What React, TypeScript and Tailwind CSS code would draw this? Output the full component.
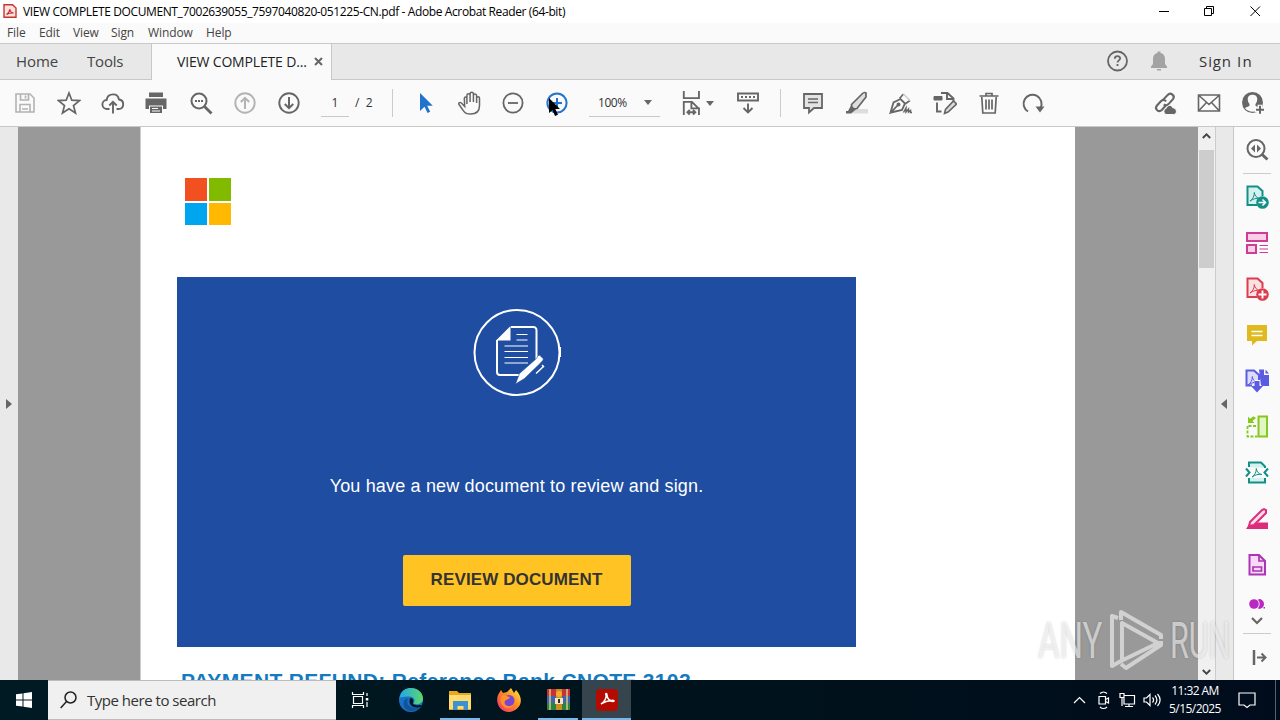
import React from 'react';
import clsx from 'clsx';

type IconProps = {
  children: React.ReactNode;
  className?: string;
  size?: number;
};

// Shared 24px line icon
const Icon: React.FC<IconProps> = ({ children, className, size = 24 }) => (
  <svg
    width={size}
    height={size}
    viewBox="0 0 24 24"
    fill="none"
    stroke="currentColor"
    strokeWidth="2"
    className={clsx('shrink-0', className)}
  >
    {children}
  </svg>
);

const Tool: React.FC<{ children: React.ReactNode; className?: string }> = ({ children, className }) => (
  <button className="flex h-full w-11 items-center justify-center">
    <Icon className={className}>{children}</Icon>
  </button>
);

const menus = [
  { label: 'File', width: 'w-8' },
  { label: 'Edit', width: 'w-[34px]' },
  { label: 'View', width: 'w-[38px]' },
  { label: 'Sign', width: 'w-[37px]' },
  { label: 'Window', width: 'w-[58px]' },
  { label: 'Help', width: 'w-8' },
];

const TitleBar = () => (
  <header className="flex h-[23px] items-center bg-white text-black">
    <svg width="14" height="16" viewBox="0 0 14 16" className="-mt-px ml-[3px]">
      <path d="M1 1.7h8.500L13 5v9.300H1z" fill="#fbe3e0" stroke="#c8352f" strokeWidth="1.400" />
      <path d="M3.500 11.500c1.500-.7 3-3 3.300-5.500.2 2.200 1.700 3.800 3.900 4-2.700-.2-5 .2-7.200 1.500z" fill="none" stroke="#c8202b" strokeWidth="1.100" />
    </svg>
    <span className="ml-[6px] text-[12px] leading-4 tracking-[-0.385px] whitespace-nowrap">
      VIEW COMPLETE DOCUMENT_7002639055_7597040820-051225-CN.pdf - Adobe Acrobat Reader (64-bit)
    </span>
    <div className="ml-auto flex">
      <svg width="122" height="20" viewBox="0 0 122 20" fill="none" stroke="#000" strokeWidth="1">
        <path d="M1 9.500h10M46.500 6.500h7v7h-7zM48.500 6.500v-2h7v7h-2M92.500 4.500l9.500 9.500M102 4.500l-9.500 9.500" />
      </svg>
    </div>
  </header>
);

const MenuBar = () => (
  <nav className="flex h-5 items-center bg-[#fafafa] pl-[7px] text-[12px] text-[#444]">
    {menus.map((m) => (
      <span key={m.label} className={clsx('shrink-0 tracking-[-0.1px]', m.width)}>{m.label}</span>
    ))}
  </nav>
);

const TabBar = () => (
  <div className="flex h-[37px] border-y border-[#c8c8c8] bg-[#e8e8e8] text-[15px] text-[#444]">
    <span className="w-[71px] pl-4 leading-[34px] tracking-[-0.1px]">Home</span>
    <span className="w-20 pl-4 leading-[34px] tracking-[-0.2px]">Tools</span>
    <div className="-mb-px flex w-[181px] items-center border-x border-[#c8c8c8] bg-[#fafafa] pb-[2px] pl-[25px] text-[14px] text-[#222]">
      <span className="w-[130px] tracking-[-0.17px] whitespace-nowrap">VIEW COMPLETE D...</span>
      <svg width="9" height="9" viewBox="0 0 9 9" className="ml-[7px]" stroke="#666" strokeWidth="2">
        <path d="M1 1l7 7M8 1L1 8" />
      </svg>
    </div>
    <div className="ml-auto flex items-center pb-px text-[#666]">
      <Icon>
        <circle cx="11.500" cy="12" r="9.500" strokeWidth="1.800" />
        <path d="M8.800 9.700c0-3.500 5.500-3.300 5.300-.2-.1 1.800-2.600 2-2.600 4.100M11.500 15v2" strokeWidth="1.800" />
      </Icon>
      <Icon className="ml-[17px] text-[#a3a3a3]">
        <path d="M4 19v-1.500l2-2.500V9.500C6 6.500 8 4.300 10.500 4V2.500h3V4C16 4.300 18 6.500 18 9.500V15l2 2.500V19zM10 20h4v1.500h-4z" fill="currentColor" stroke="none" />
      </Icon>
      <span className="ml-[28px] w-[81px] text-[15px] tracking-[1.2px] text-[#333]"><span className="tracking-[0.9px]">Sign</span> In</span>
    </div>
  </div>
);

const Toolbar = () => (
  <div className="flex h-[47px] items-center border-b border-[#c8c8c8] bg-[#fafafa] pl-[3px] text-[#666]">
    <Tool className="text-[#b3b3b3]">
      <path d="M3 3h14l4 4v14H3zM7.500 3v6h8V3M7 21v-7.500h10V21M12.500 4.500v3M9 18h6" strokeWidth="1.600" />
    </Tool>
    <Tool>
      <path d="M12 2l2.800 7.200 7.700.4-6 4.900 2 7.500L12 17.800 5.500 22l2-7.500-6-4.900 7.700-.4z" strokeWidth="1.700" />
    </Tool>
    <Tool>
      <path d="M8.500 18H6.200a4.500 4.500 0 01-.6-9c.5-3.700 3.200-5.600 6.600-5.600 3.400 0 5.300 2.200 5.700 5.100 6 .6 5.500 9.500-.3 9.500h-2.100M12 22.500V11M8.300 14.500L12 10.800l3.700 3.700" strokeWidth="1.900" />
    </Tool>
    <Tool className="-translate-x-px">
      <path d="M5 1.500h14V6H5zM1.500 7.500h21V18H19v-3.500H5V18H1.500zM6 15.500h12V22H6z" fill="currentColor" stroke="none" />
      <path d="M8 17.500h6M8 20h8" stroke="#fafafa" strokeWidth="1.200" />
    </Tool>
    <Tool>
      <circle cx="10" cy="10" r="7.500" />
      <path d="M15.500 15.500l7 7" strokeWidth="2.800" />
      <path d="M6 10h2M9 10h2M12 10h2" strokeWidth="1.800" />
    </Tool>
    <Tool className="text-[#b3b3b3]">
      <circle cx="12" cy="12" r="9.700" strokeWidth="1.900" />
      <path d="M12 18V7M7.800 11L12 6.800l4.200 4.200" strokeWidth="2" />
    </Tool>
    <Tool>
      <circle cx="12" cy="12" r="9.700" strokeWidth="1.900" />
      <path d="M12 6v11M7.800 13l4.200 4.200 4.200-4.200" strokeWidth="2" />
    </Tool>
    <span className="ml-[10px] h-[28px] w-7 border-b border-[#c8c8c8] text-center text-[12px] leading-[27px] text-[#333]">1</span>
    <span className="ml-[6px] w-[37px] text-[12px] text-[#333]">/&nbsp; 2</span>
    <div className="mr-[11px] h-7 w-px bg-[#ccc]" />
    <Tool className="text-[#2273cc]">
      <path d="M6 2v18l4.500-4.300L13.500 22l2.700-1.300-3-6h5.600z" fill="currentColor" stroke="none" />
    </Tool>
    <Tool>
      <path d="M6.700 15.500L3.400 12c-1.800-1.300-3.300.2-2.200 1.700l4.300 6.200c1.500 2.300 3.700 3.200 7 3.200 5.500 0 9-3.100 9-8.600V7.200c0-2.100-2.800-2.100-2.900 0V12 4.600c0-2.200-3.100-2.300-3.200 0V11 3c0-2.300-3.300-2.300-3.300 0v8V4.500c-.1-2.200-3.200-2.200-3.200 0V13 7.500c-.1-2-2.500-2-2.600 0z" strokeWidth="1.500" />
    </Tool>
    <Tool className="-translate-x-px">
      <circle cx="12" cy="12" r="9.600" strokeWidth="1.800" />
      <path d="M7 12h10" strokeWidth="1.800" />
    </Tool>
    <div className="relative h-full w-11">
      <Tool className="-translate-x-px text-[#2273cc]">
        <circle cx="12" cy="12" r="9.600" />
        <path d="M7 12h10M12 7v10" />
      </Tool>
      <svg width="14" height="19" viewBox="0 0 14 19" className="absolute top-[18px] left-[12px]">
        <path d="M1 0v15l3.500-3 2.500 6 3-1.300-2.600-5.700H12z" fill="#000" />
      </svg>
    </div>
    <div className="ml-[9px] flex h-[28px] w-[71px] items-center border-b border-[#c8c8c8] pl-[9px] text-[12px] text-[#333]">
      <span className="tracking-[-0.45px]">100%</span>
      <svg width="8" height="5" viewBox="0 0 8 5" className="mr-[8px] ml-auto" fill="#666"><path d="M0 0h8L4 5z" /></svg>
    </div>
    <div className="ml-[20px] flex h-full w-16 items-center">
      <Icon size={26}>
        <path d="M3.500 1v6.500h14V1M3.500 23V11H11l6.500 6.500M10.500 11v6h7V23M7 20.500h7M9 18.300l-2.200 2.200L9 22.700M12 18.300l2.200 2.200-2.200 2.200" strokeWidth="1.700" />
      </Icon>
      <svg width="8" height="5" viewBox="0 0 8 5" fill="#666"><path d="M0 0h8L4 5z" /></svg>
    </div>
    <div className="-ml-[18px] flex h-full items-center">
      <Tool>
        <path d="M2 2.500h20v7H2zM12 12.500v9M7.500 17l4.500 4.500 4.500-4.500" strokeWidth="1.900" />
        <path d="M5 6h2M9 6h2M13 6h2M17 6h2" strokeWidth="1.900" />
      </Tool>
    </div>
    <div className="mr-[10px] ml-[10px] h-7 w-px bg-[#ccc]" />
    <Tool>
      <path d="M3 3h18v14h-8l-5 4.500V17H3z" strokeWidth="1.800" fill="#e3e3e3" />
      <path d="M7 8h10M7 11.500h10" strokeWidth="1.500" />
    </Tool>
    <Tool>
      <path d="M12 18h11v4.500H5z" fill="#ddd" stroke="none" />
      <path d="M6.500 13.500L16 4c2-2.500 4-2.800 5-2v4l-9 11.500-5 .5z" fill="#ddd" strokeWidth="1.700" />
      <path d="M6 14.500L3 20H1v2.500h5l5-4z" fill="currentColor" stroke="none" />
    </Tool>
    <Tool>
      <path d="M1.500 21.500L4.500 11.500 11.500 8l4.500 4.500-3 6.500-11 2.500 6.500-7" strokeWidth="1.800" />
      <path d="M10.500 7.500L14.500 3M21 9.500l-5 3.500" strokeWidth="1.700" />
      <path d="M14.500 3l6.500 6.500" stroke="#ccc" strokeWidth="1.500" />
      <circle cx="9.500" cy="13.500" r="1" />
      <path d="M14.500 21.500l2.500-4.500v4l2.500-3v3l2-1.500v2H23" strokeWidth="1.500" />
    </Tool>
    <Tool>
      <path d="M8 2h6.500l6 5.500V10M14 2v6h6.500M4 11.500V20.500h4.500" strokeWidth="1.900" />
      <path d="M1 5.500h8V9H1z" fill="currentColor" strokeWidth="1" />
      <path d="M11.500 22.500l1-4 8-8.500 3 3-8.500 8z" strokeWidth="1.600" fill="#ddd" />
    </Tool>
    <Tool>
      <path d="M2.500 5h19M9 5V2.500h6V5M4.800 6l1 16h12.400l1-16M9 8.500v10M12 8.500v10M15 8.500v10" strokeWidth="1.700" />
    </Tool>
    <Tool>
      <path d="M7 20.500A9 9 0 1119.500 17" strokeWidth="2" />
      <path d="M14.500 15.500h9l-4.500 6z" fill="currentColor" stroke="none" />
    </Tool>
    <div className="mr-[5px] ml-auto flex h-full">
      <Tool>
        <g strokeWidth="2.100">
          <path d="M9.500 9.500l5.200-5.600c3-3 7.800.8 5.300 4.200l-4.500 5c-1.400 1.400-3.400 1.400-4.700.3" />
          <path d="M12.800 14.500l-4 4.500c-3 2.800-7.600-.8-5-4.300l4.300-4.600c1.500-1.500 3.700-1.400 5 .2" />
        </g>
        <path d="M13 23.500a3.300 3.300 0 01.3-6.300c1-3.500 5.300-3.600 6.400-.5 4.800.2 4.800 6.800.8 6.800z" fill="currentColor" stroke="#fafafa" strokeWidth="1" />
      </Tool>
      <Tool>
        <path d="M1.500 4h21v16h-21zM2 4.500l10 9 10-9M2 19.500l7.500-8M22 19.500l-7.500-8" strokeWidth="1.600" />
      </Tool>
      <Tool>
        <circle cx="11.500" cy="11.500" r="10.500" fill="currentColor" stroke="none" />
        <path d="M11.500 3.700c3.500 0 5 2.300 4.700 5-.2 2.200-.9 3.200-1.700 4.200v1.900c1.300 1 3.700 1.200 4.500 2.500-1.800 2.300-4.500 3.500-7.500 3.500s-5.700-1.200-7.500-3.500c.8-1.300 3.200-1.500 4.500-2.500v-1.900c-.8-1-1.500-2-1.700-4.200-.3-2.700 1.200-5 4.700-5z" fill="#fafafa" stroke="none" />
        <path d="M13.800 18.800h10M18.800 13.800v10" stroke="#fafafa" strokeWidth="4.500" />
        <path d="M15 18.800h8M19 14.800v8" strokeWidth="2" />
      </Tool>
    </div>
  </div>
);

const WelcomeCard = () => (
  <section className="flex h-[370px] w-[679px] flex-col items-center bg-[#1e4da1] pt-8 text-white">
    <svg width="88" height="88" viewBox="0 0 88 88" fill="none" stroke="#fff" strokeWidth="2">
      <circle cx="44" cy="43.500" r="42.500" />
      <path d="M38 18h22.500a3 3 0 013 3v34M24 31v32a3 3 0 003 3h21" />
      <path d="M23 31.500L37.500 17v14.500z" fill="#fff" stroke="none" />
      <path d="M43.500 25.500h11M43.500 31h11M31.500 37h23.500M31.500 42.500h23.500M31.500 48.500h23.500M31.500 54h23.500" strokeWidth="1.200" />
      <path d="M42.500 75l4-10.500 17-15c1-2.500 2.500-4 3.500-3l3 3c1 1-1 3-2 4L51.500 69.500z" fill="#fff" stroke="#1e4da1" strokeWidth="0.600" />
      <path d="M69 56l1.500 1.500-7.500 7" strokeWidth="1.500" />
      <path d="M87 38v10" strokeWidth="2" />
    </svg>
    <p className="mt-[75px] text-[18px] leading-7 tracking-[0.165px] whitespace-nowrap">You have a new document to review and sign.</p>
    <button className="mt-[55px] h-[51px] w-[228px] rounded-xs bg-[#ffc424] pb-[2px] text-[17px] font-bold tracking-[0.12px] whitespace-nowrap text-[#333]">
      REVIEW DOCUMENT
    </button>
  </section>
);

const DocumentPage = () => (
  <article className="w-[935px] overflow-hidden border-l border-[#ccc] bg-white pl-9 font-['Liberation_Sans',sans-serif]">
    <div className="mt-[51px] ml-2 grid w-[46px] grid-cols-2 gap-[2px]">
      <i className="h-[23px] bg-[#f35022]" />
      <i className="h-[23px] bg-[#80bb00]" />
      <i className="h-[22px] bg-[#00a5f0]" />
      <i className="h-[22px] bg-[#ffb901]" />
    </div>
    <div className="mt-[52px]">
      <WelcomeCard />
    </div>
    {/* Heading runs past the bottom of the viewport */}
    <h1 className="mt-[22px] ml-1 text-[21px] leading-6 font-bold tracking-[0.34px] whitespace-nowrap text-[#147bc1]">
      PAYMENT REFUND: Reference Bank CNOTE 3102
    </h1>
  </article>
);

const Acrobat = ({ x = 0 }: { x?: number }) => (
  <path
    d="M6 16c2.500-1.500 4.500-5 4.300-8.500.5 3.500 2.500 5.500 5.500 6-3.500-.6-6.500.3-9.800 2.500z"
    transform={`translate(${x} 0)`}
    strokeWidth="1"
  />
);

const sideTools = [
  {
    name: 'export',
    color: 'text-[#148f87]',
    art: (
      <>
        <path d="M12 20H2.500V1.500H12.500L17.500 6v5" fill="#d5f1ef" />
        <Acrobat x={-1} />
        <circle cx="17.500" cy="17.500" r="6.300" fill="currentColor" stroke="none" />
        <path d="M13.500 17.500h7M17.500 14.500l3 3-3 3" stroke="#fff" strokeWidth="1.600" />
      </>
    ),
  },
  {
    name: 'organize',
    color: 'text-[#ce3c98]',
    art: (
      <>
        <path d="M2 2h20v8H2zM2 14h9v8H2z" fill="#f9cfe6" />
        <path d="M14.500 14.500H23M14.500 18H23M14.500 21.500H23" strokeWidth="1.200" />
      </>
    ),
  },
  {
    name: 'create',
    color: 'text-[#dc3d4d]',
    art: (
      <>
        <path d="M12 20H2.500V1.500H12.500L17.500 6v5" fill="#fde1e2" />
        <Acrobat x={-1} />
        <circle cx="17.500" cy="17.500" r="6.300" fill="currentColor" stroke="none" />
        <path d="M13.500 17.500h8M17.500 13.500v8" stroke="#fff" strokeWidth="1.900" />
      </>
    ),
  },
  {
    name: 'comment',
    color: 'text-[#dfb91e]',
    art: (
      <>
        <path d="M2 2h20V18H12l-5 4.500V18H2z" fill="currentColor" stroke="none" />
        <path d="M6.500 8.500h11M6.500 12.500h11" stroke="#fff" strokeWidth="1.700" />
      </>
    ),
  },
  {
    name: 'combine',
    color: 'text-[#5c5ce0]',
    art: (
      <>
        <path d="M14 .5h5v5.500h5v11h-8zM20.500.5l3.500 4h-3.500z" fill="currentColor" stroke="none" />
        <path d="M7 16.500H1.500V1.500H9l5 4.500v5" fill="#dddcff" />
        <Acrobat x={-3} />
        <path d="M12 11v10.500M7 17l5 5 5-5" stroke="#fafafa" strokeWidth="5" />
        <path d="M9.500 12h5v5h3.500L12 23.500 6 17h3.500z" fill="currentColor" stroke="none" />
      </>
    ),
  },
  {
    name: 'compare',
    color: 'text-[#86c91e]',
    art: (
      <>
        <path d="M13.500 1.500H22v20h-8.500z" fill="#e2f5c7" />
        <path d="M2.500 11v10.500h10M3.500 11h9" strokeDasharray="3 1.500" strokeWidth="1.800" />
        <path d="M3 1.500l2 2.200 3.500-2.500L11 3 7.500 6l2 2H3z" fill="currentColor" stroke="none" />
      </>
    ),
  },
  {
    name: 'compress',
    color: 'text-[#148f87]',
    art: (
      <>
        <path d="M4 6V1.500h12l4 4V7M4 17v4.500h16V17" fill="#d5f1ef" />
        <Acrobat x={1} />
        <path d="M1 7.500l3.500 4L1 15.500M23 7.500l-3.500 4 3.500 4" />
      </>
    ),
  },
  {
    name: 'redact',
    color: 'text-[#dc2d7d]',
    art: (
      <>
        <path d="M13 15.500h10v6.500H1l3-4.500h6z" fill="currentColor" stroke="none" />
        <path d="M5 15L17 3l2-1 2 1v3L9 18l-5 1z" fill="#fbdae9" />
      </>
    ),
  },
  {
    name: 'stamp',
    color: 'text-[#ab35b5]',
    art: (
      <>
        <path d="M4.500 2h9.500l6 6v13.500H4.500z" fill="#f7d9f9" />
        <path d="M14 2v6h6M8 14h8.500v4H8z" strokeWidth="1.700" />
      </>
    ),
  },
];

const SidePanel = () => (
  <aside className="flex w-[47px] flex-col items-center border-l border-[#c8c8c8] bg-[#fafafa] text-[#666]">
    <div className="flex h-[46px] items-center">
      <Icon>
        <circle cx="11" cy="10.500" r="8.500" />
        <path d="M16.500 16l6 5.500" strokeWidth="3" />
        <path d="M10 6.500v8l-4-4zM12 6.500v8l4-4z" fill="currentColor" stroke="none" />
      </Icon>
    </div>
    <div className="h-px w-7 bg-[#ccc]" />
    {sideTools.map((t) => (
      <div key={t.name} className="flex h-[46px] shrink-0 items-center">
        <Icon className={t.color}>{t.art}</Icon>
      </div>
    ))}
    <svg width="18" height="10" viewBox="0 0 18 10" className="mt-[11px] shrink-0" fill="#b928c3">
      <circle cx="6" cy="5" r="4.800" />
      <path d="M11 0a5 5 0 010 10l-1-.7a7 7 0 000-8.600z" />
      <path d="M15.500 8h1.500v1.500h-1.500z" />
    </svg>
    <svg width="12" height="8" viewBox="0 0 12 8" fill="none" stroke="#666" strokeWidth="2.200" className="mt-[8px] shrink-0">
      <path d="M1 1l5 5 5-5" />
    </svg>
    <div className="mt-[8px] h-px w-7 shrink-0 bg-[#ccc]" />
    <svg width="15" height="16" viewBox="0 0 15 16" fill="none" stroke="#666" className="mt-[16px] ml-[5px] shrink-0">
      <path d="M2 0v15" strokeWidth="2.500" />
      <path d="M5 7.500h8.500M9.500 3.500l4 4-4 4" strokeWidth="2" />
    </svg>
  </aside>
);

const Watermark = () => (
  <div className="absolute top-[482px] left-[1038px] flex h-16 w-[194px] items-center font-[Roboto,sans-serif] text-[50px] font-normal text-white/60 [text-shadow:0_0_3px_rgba(0,0,0,0.2)]">
    <span className="w-[70px] origin-left scale-x-[0.66]">ANY</span>
    <svg width="56" height="64" viewBox="0 0 56 64" fill="none" stroke="#fff" strokeOpacity=".55" strokeWidth="4" strokeLinejoin="round" className="shrink-0">
      <path d="M10 9L4 7v50l9-5 37-18L14 14v36M13 11V3l40 23v4M13 55l5 4 35-23v-4" />
    </svg>
    <span className="ml-[6px] w-[60px] origin-left scale-x-[0.61]">RUN</span>
  </div>
);

const Workspace = () => (
  <main className="relative flex h-[553px] overflow-hidden">
    <div className="flex w-[18px] items-center bg-[#e9e9e9] pl-[6px]">
      <svg width="7" height="10" viewBox="0 0 7 10" fill="#666"><path d="M0 0l6 5-6 5z" /></svg>
    </div>
    <div className="flex w-[1180px] bg-[#999] pl-[122px]">
      <DocumentPage />
    </div>
    <div className="flex w-[17px] flex-col items-center bg-[#f0f0f0]">
      <svg width="9" height="6" viewBox="0 0 9 6" fill="none" stroke="#444" strokeWidth="1.800" className="mt-[6px]"><path d="M.8 5l3.700-3.700L8.200 5" /></svg>
      <div className="mt-[11px] h-[118px] w-[15px] bg-[#cdcdcd]" />
      <svg width="9" height="6" viewBox="0 0 9 6" fill="none" stroke="#444" strokeWidth="1.800" className="mt-auto mb-[5px]"><path d="M.8 1l3.700 3.700L8.200 1" /></svg>
    </div>
    <div className="flex w-[18px] items-center border-l border-[#ccc] bg-[#e9e9e9] pl-[5px]">
      <svg width="7" height="10" viewBox="0 0 7 10" fill="#666"><path d="M6 0L0 5l6 5z" /></svg>
    </div>
    <SidePanel />
    <Watermark />
  </main>
);

const Task: React.FC<{ children: React.ReactNode; className?: string }> = ({ children, className }) => (
  <div className={clsx('flex h-10 w-[49px] items-center justify-center', className)}>
    <svg width="26" height="26" viewBox="0 0 26 26">{children}</svg>
  </div>
);

const Taskbar = () => (
  <footer className="flex h-10 bg-[linear-gradient(90deg,#001a23,#00121c_60%,#000c1c)] text-white">
    <div className="flex w-12 items-center justify-center">
      <svg width="16" height="16" viewBox="0 0 16 16" fill="#fff">
        <path d="M0 2.300l6.500-.9v6.100H0zM7.500 1.200L16 0v7.500H7.500zM0 8.500h6.500v6.100L0 13.700zM7.500 8.500H16V16l-8.500-1.200z" />
      </svg>
    </div>
    <div className="flex w-[288px] items-center border-y border-[#bbb] bg-[#f0f0f0] pl-3 text-[15px] text-[#333]">
      <svg width="17" height="18" viewBox="0 0 17 18" fill="none" stroke="#222" strokeWidth="1.500">
        <circle cx="10.500" cy="6.500" r="5.500" />
        <path d="M6.500 10.500L.7 17" />
      </svg>
      <span className="ml-[10px] tracking-[-0.48px]">Type here to search</span>
    </div>
    <div className="flex h-10 w-12 items-center justify-center">
      <svg width="18" height="18" viewBox="0 0 18 18" fill="none" stroke="#fff" strokeWidth="1.200">
        <path d="M2.500 5.500h9v7h-9zM1.500 1v2.500h11V1M1.500 17v-2.500h11V17M16 2v3M16 11v5" />
        <path d="M14.800 7h2.500v2.500h-2.500z" fill="#fff" stroke="none" />
      </svg>
    </div>
    <Task className="ml-[2px]">
      <defs>
        <linearGradient id="edgeTop" x1="0" y1="0" x2="1" y2="0">
          <stop offset="0" stopColor="#24a5e8" />
          <stop offset="1" stopColor="#5cd86c" />
        </linearGradient>
      </defs>
      <circle cx="13" cy="13" r="12" fill="#1672c4" />
      <path d="M1.500 11C3 3 8 1 13 1c8 0 12.500 6 12 11.500-.4 4-6 6-9.500 4 2.500-3 .5-7-4-7C7 9.500 3 10 1.500 11z" fill="url(#edgeTop)" />
      <path d="M9.500 12.500c-2 7 6 10 13 7-5 7-17 6-17-3 0-3 2-5 5-5z" fill="#125399" />
      <path d="M12 11.500c3-1.500 4 2.500 3 4-1 2 3 3.500 7 2.500l2 .5-1.500 1.500c-6 1.500-13-1-10.500-8.500z" fill="#00151f" />
    </Task>
    <Task className="relative">
      <path d="M2 4h8l2 2h12v17H2z" fill="#e9a91c" />
      <path d="M2 8h22v14H2z" fill="#ffdb70" />
      <path d="M6 14h15v9h-4.500v-4h-6v4H6z" fill="#3b91d2" />
    </Task>
    <Task>
      <defs>
        <linearGradient id="fox" x1="1" y1="0" x2="0" y2="1">
          <stop offset="0" stopColor="#fff044" />
          <stop offset=".45" stopColor="#ff8b22" />
          <stop offset="1" stopColor="#f42776" />
        </linearGradient>
      </defs>
      <path d="M2 8l3-5 2 3 4-1 4-4 3 5 2-3c11 12 1 22-7 22C4 25-1 16 2 8z" fill="url(#fox)" />
      <circle cx="13" cy="13.500" r="5.500" fill="#7945d3" />
      <path d="M5 9c4-2 6 1 9 1-1 3-4 2-5 4-2 4 3 7 8 4-3 7-15 2-12-9z" fill="#ff9127" />
    </Task>
    <Task>
      <path d="M2 2h23v7H2z" fill="#c83135" />
      <path d="M2 9h23v7H2z" fill="#3e66ae" />
      <path d="M2 16h23v7H2z" fill="#298444" />
      <path d="M5 2v21M22 2v21" stroke="#d8c887" strokeWidth="1.500" />
      <path d="M11 2h6v21h-6z" fill="#ce8c22" />
      <path d="M10 11h8v6h-8z" fill="#f4e5c0" />
      <path d="M13 12h2v4h-2z" fill="#33281b" />
      <circle cx="14" cy="7" r="3" fill="#f3ad30" />
    </Task>
    <Task className="bg-[#35444d]">
      <rect x="2" y="2" width="22" height="22" rx="4" fill="#b30b00" />
      <path d="M7 17c3-1.500 6-6.500 5-9-1-2 1-2 1 0 0 3.500 3 6.500 6 6.500 2 0 1-1.500-1-1.300C14 13.500 10 15 7 17z" fill="none" stroke="#fff" strokeWidth="1.500" />
    </Task>
    {/* Running app markers sit over the bottom edge of the buttons */}
    <div className="relative w-0">
      <i className="absolute right-[151px] bottom-0 h-[2px] w-10 bg-[#76b9ed]" />
      <i className="absolute right-[53px] bottom-0 h-[2px] w-10 bg-[#76b9ed]" />
      <i className="absolute right-0 bottom-0 h-[2px] w-[49px] bg-[#76b9ed]" />
    </div>
    <div className="ml-auto flex items-center">
      <svg width="88" height="20" viewBox="0 0 88 20" fill="none" stroke="#fff" strokeWidth="1.200">
        <path d="M1 13l5.500-5.500L12 13" />
        <path d="M26 6.500h6.500v7.500H26zM32.500 9.500l3-1.500v5l-3-1.500M27 3.500c2-2 5-2 7 0M27 17c2 2 5 2 7 0" />
        <path d="M51 5.500h10.500v8.500H51zM47 3.500h4v4h-4zM49 7.500V16M56 14v2.500M52 16.500h8" />
        <path d="M71 8h2.500L77 4.500v11L73.500 12H71zM79.500 7.500c1.300 1.500 1.300 3.500 0 5M82 5.500c2.500 3 2.500 6 0 9M84.500 4c3.500 4 3.500 8 0 12" />
      </svg>
      <div className="-ml-[2px] w-[72px] text-center text-[12px] leading-[18px] whitespace-nowrap">
        <div className="tracking-[-0.6px]">11:32 AM</div>
        <div className="tracking-[-0.55px]">5/15/2025</div>
      </div>
      <svg width="18" height="18" viewBox="0 0 18 18" fill="none" stroke="#fff" strokeWidth="1.200" className="mr-[19px] ml-[7px]">
        <path d="M1 2h16v12h-5l-3 2.500L6 14H1z" />
      </svg>
      <div className="mr-1 h-10 w-px bg-[#555f6d]" />
    </div>
  </footer>
);

const App: React.FC = () => (
  <div className="h-[720px] w-[1280px] overflow-hidden font-['Open_Sans','Noto_Sans',sans-serif]">
    <TitleBar />
    <MenuBar />
    <TabBar />
    <Toolbar />
    <Workspace />
    <Taskbar />
  </div>
);

export default App;
